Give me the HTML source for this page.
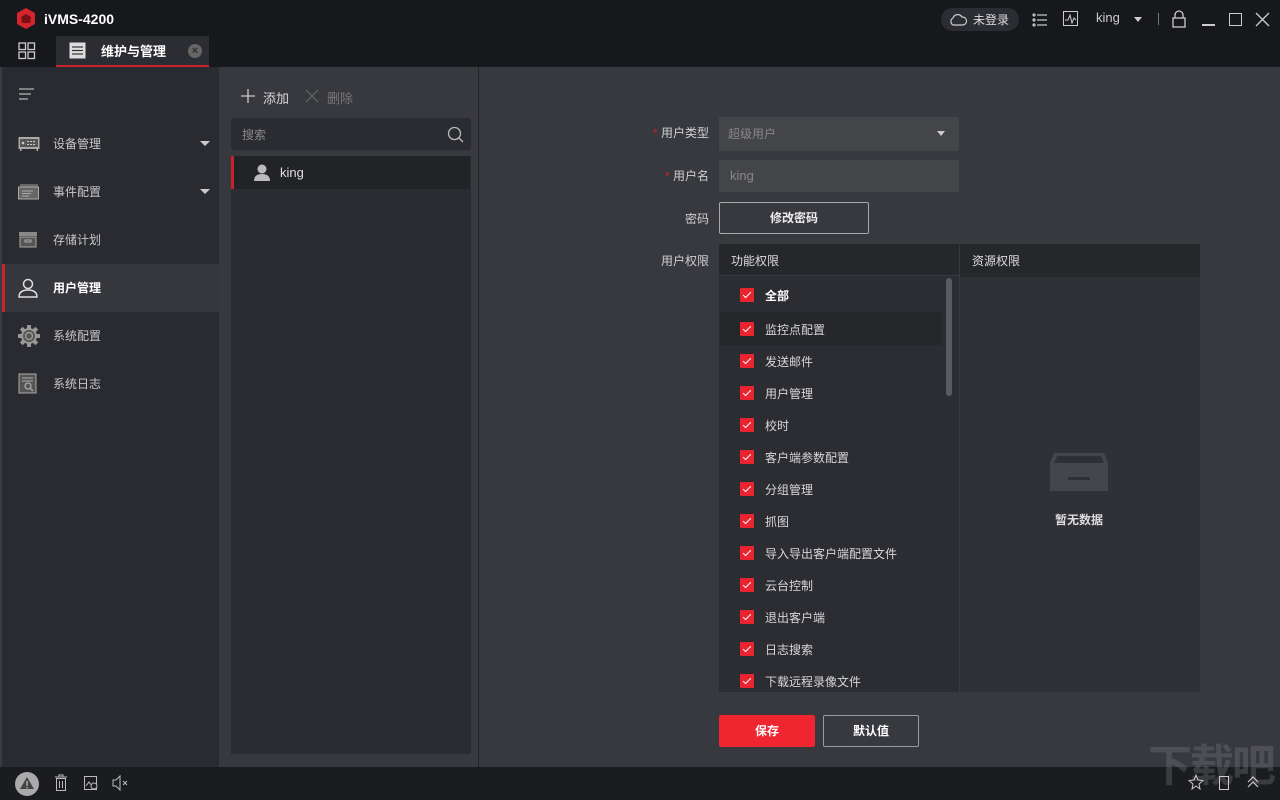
<!DOCTYPE html>
<html><head><meta charset="utf-8"><style>
*{margin:0;padding:0;box-sizing:border-box}
body{width:1280px;height:800px;overflow:hidden;background:#38393e;font-family:"Liberation Sans","Noto Sans CJK SC",sans-serif;font-size:12px;color:#d8d8d8;position:relative}
.abs{position:absolute}
.title{left:0;top:0;width:1280px;height:67px;background:#17181c}
.side{left:0;top:67px;width:219px;height:700px;background:#2a2b30;border-left:2px solid #3a3b40}
.mid{left:219px;top:67px;width:260px;height:700px;background:#38393e;border-right:1px solid #222}
.bot{left:0;top:767px;width:1280px;height:33px;background:#1b1c20}
.nav{position:absolute;left:2px;width:217px;height:48px;display:flex;align-items:center;color:#c8c8c8;font-size:12px}
.nav .t{position:absolute;left:51px;top:15px}
.nav .ic{position:absolute;left:16px}
.nav .ar{position:absolute;left:198px;top:21px;border:5px solid transparent;border-top:5px solid #ccc}
.lab{position:absolute;text-align:right;width:80px;color:#d0d0d0}
.cb{position:absolute;left:740px;width:14px;height:14px;background:#e8252f;border-radius:1px}
.cb:after{content:"";position:absolute;left:5px;top:2px;width:3px;height:7px;border:solid #fff;border-width:0 1.5px 1.5px 0;transform:rotate(45deg)}
.ct{position:absolute;left:765px;color:#d8d8d8;margin-top:-1px}
</style></head><body>
<div class="abs title"></div>
<svg class="abs" style="left:16px;top:8px" width="20" height="22" viewBox="0 0 20 22"><polygon points="10,0 19,5 19,16 10,21 1,16 1,5" fill="#d4242c"/><polygon points="10,6 15,9 14,15 6,15 5,9" fill="#7a0f14"/></svg>
<div class="abs" style="left:44px;top:11px;font-size:14px;font-weight:bold;color:#fff">iVMS-4200</div>
<svg class="abs" style="left:18px;top:42px" width="18" height="18"><g fill="none" stroke="#ccc" stroke-width="1.3"><rect x="1" y="1" width="6.5" height="6.5"/><rect x="10" y="1" width="6.5" height="6.5"/><rect x="1" y="10" width="6.5" height="6.5"/><rect x="10" y="10" width="6.5" height="6.5"/></g></svg>
<div class="abs" style="left:56px;top:36px;width:153px;height:31px;background:#2c2d32;border-bottom:2px solid #c8232b"></div>
<svg class="abs" style="left:69px;top:42px" width="17" height="17"><rect x="0.5" y="0.5" width="16" height="16" fill="#ddd"/><g stroke="#333" stroke-width="1.2"><line x1="3" y1="5" x2="14" y2="5"/><line x1="3" y1="8.5" x2="14" y2="8.5"/><line x1="3" y1="12" x2="14" y2="12"/></g></svg>
<div class="abs" style="left:101px;top:41px;font-size:13px;font-weight:bold;color:#fff">维护与管理</div>
<div class="abs" style="left:188px;top:44px;width:14px;height:14px;border-radius:50%;background:#666;color:#2c2d32;font-size:11px;line-height:14px;text-align:center;font-weight:bold">×</div>
<div class="abs" style="left:941px;top:8px;width:78px;height:23px;border-radius:12px;background:#2c2d32"></div>
<svg class="abs" style="left:948px;top:12px" width="20" height="15"><path d="M5 13 A4 4 0 0 1 5 6 A5 5 0 0 1 14 5 A4 4 0 0 1 15 13 Z" fill="none" stroke="#ccc" stroke-width="1.2"/></svg>
<div class="abs" style="left:973px;top:11px;color:#ddd;font-size:12px">未登录</div>
<svg class="abs" style="left:1032px;top:12px" width="16" height="16"><g stroke="#ccc" stroke-width="1.2" fill="none"><circle cx="2" cy="3" r="1"/><circle cx="2" cy="8" r="1"/><circle cx="2" cy="13" r="1"/><line x1="5" y1="3" x2="15" y2="3"/><line x1="5" y1="8" x2="15" y2="8"/><line x1="5" y1="13" x2="15" y2="13"/></g></svg>
<svg class="abs" style="left:1063px;top:11px" width="16" height="16"><rect x="0.5" y="0.5" width="14" height="14" fill="none" stroke="#ccc"/><path d="M2 9 L5 9 L7 4 L9 12 L11 7 L13 9" fill="none" stroke="#ccc"/></svg>
<div class="abs" style="left:1096px;top:10px;color:#ccc;font-size:13px">king</div>
<div class="abs" style="left:1134px;top:17px;border:4px solid transparent;border-top:5px solid #ccc"></div>
<div class="abs" style="left:1158px;top:13px;width:1px;height:12px;background:#777"></div>
<svg class="abs" style="left:1172px;top:10px" width="14" height="18"><path d="M3 8 V5 A4 4 0 0 1 11 5 V8" fill="none" stroke="#ccc" stroke-width="1.3"/><rect x="1" y="8" width="12" height="9" fill="none" stroke="#ccc" stroke-width="1.3"/></svg>
<div class="abs" style="left:1202px;top:24px;width:13px;height:1.5px;background:#ccc"></div>
<div class="abs" style="left:1229px;top:13px;width:13px;height:13px;border:1.5px solid #ccc"></div>
<svg class="abs" style="left:1255px;top:12px" width="15" height="15"><path d="M1 1 L14 14 M14 1 L1 14" stroke="#ccc" stroke-width="1.3"/></svg>

<div class="abs side"></div>
<svg class="abs" style="left:19px;top:88px" width="16" height="12"><g stroke="#bbb" stroke-width="1.2"><line x1="0" y1="1" x2="15" y2="1"/><line x1="0" y1="6" x2="12" y2="6"/><line x1="0" y1="11" x2="9" y2="11"/></g></svg>
<div class="nav" style="top:120px"><svg class="ic" width="22" height="16"><rect x="0.5" y="1" width="21" height="12" fill="#aaa"/><rect x="2" y="3" width="18" height="8" fill="#555"/><circle cx="5" cy="7" r="1.3" fill="#ccc"/><g fill="#ccc"><rect x="9" y="5" width="2" height="1"/><rect x="12" y="5" width="2" height="1"/><rect x="15" y="5" width="2" height="1"/><rect x="9" y="8" width="2" height="1"/><rect x="12" y="8" width="2" height="1"/><rect x="15" y="8" width="2" height="1"/></g><rect x="2" y="13" width="1.5" height="2" fill="#aaa"/><rect x="18.5" y="13" width="1.5" height="2" fill="#aaa"/></svg><span class="t">设备管理</span><span class="ar"></span></div>
<div class="nav" style="top:168px"><svg class="ic" width="22" height="16"><rect x="2" y="0" width="18" height="3" fill="#666"/><rect x="0.5" y="3" width="20" height="12" fill="#666" stroke="#aaa"/><g stroke="#aaa"><line x1="4" y1="7" x2="15" y2="7"/><line x1="4" y1="9.5" x2="13" y2="9.5"/><line x1="4" y1="12" x2="11" y2="12"/></g></svg><span class="t">事件配置</span><span class="ar"></span></div>
<div class="nav" style="top:216px"><svg class="ic" width="22" height="18"><rect x="1" y="1" width="18" height="4" fill="#888"/><rect x="2" y="6" width="16" height="10" fill="#555" stroke="#aaa"/><rect x="7" y="9" width="6" height="2" fill="none" stroke="#aaa"/></svg><span class="t">存储计划</span></div>
<div class="nav" style="top:264px;background:#36373d;color:#fff;font-weight:bold"><div style="position:absolute;left:0;top:0;width:3px;height:48px;background:#c8232b"></div><svg class="ic" width="20" height="20"><circle cx="10" cy="6" r="4.5" fill="none" stroke="#ddd" stroke-width="1.5"/><path d="M1 19 Q1 12 10 12 Q19 12 19 19 Z" fill="none" stroke="#ddd" stroke-width="1.5"/></svg><span class="t">用户管理</span></div>
<div class="nav" style="top:312px"><svg class="ic" width="22" height="22" viewBox="0 0 22 22"><g fill="#999"><circle cx="11" cy="11" r="8"/><g transform="translate(11 11)"><rect x="-2" y="-11" width="4" height="22"/><rect x="-2" y="-11" width="4" height="22" transform="rotate(45)"/><rect x="-2" y="-11" width="4" height="22" transform="rotate(90)"/><rect x="-2" y="-11" width="4" height="22" transform="rotate(135)"/></g></g><circle cx="11" cy="11" r="6" fill="#555"/><circle cx="11" cy="11" r="3.5" fill="none" stroke="#999" stroke-width="1.5"/></svg><span class="t">系统配置</span></div>
<div class="nav" style="top:360px"><svg class="ic" width="20" height="22"><rect x="1" y="1" width="17" height="19" fill="#555" stroke="#aaa"/><line x1="4" y1="5" x2="15" y2="5" stroke="#aaa"/><line x1="4" y1="8" x2="15" y2="8" stroke="#aaa"/><circle cx="10" cy="13" r="3" fill="none" stroke="#aaa" stroke-width="1.3"/><line x1="12" y1="15" x2="15" y2="18" stroke="#aaa" stroke-width="1.3"/></svg><span class="t">系统日志</span></div>

<div class="abs mid"></div>
<svg class="abs" style="left:240px;top:88px" width="16" height="16"><path d="M8 1 V15 M1 8 H15" stroke="#ccc" stroke-width="1.3"/></svg>
<div class="abs" style="left:263px;top:88px;color:#d8d8d8;font-size:13px">添加</div>
<svg class="abs" style="left:305px;top:89px" width="14" height="14"><path d="M1 1 L13 13 M13 1 L1 13" stroke="#666" stroke-width="1.2"/></svg>
<div class="abs" style="left:327px;top:88px;color:#777;font-size:13px">删除</div>
<div class="abs" style="left:231px;top:118px;width:240px;height:32px;background:#2b2c31;border-radius:2px"></div>
<div class="abs" style="left:242px;top:126px;color:#888">搜索</div>
<svg class="abs" style="left:447px;top:126px" width="18" height="18"><circle cx="7.5" cy="7.5" r="6" fill="none" stroke="#bbb" stroke-width="1.3"/><line x1="12" y1="12" x2="16" y2="16" stroke="#bbb" stroke-width="1.3"/></svg>
<div class="abs" style="left:231px;top:156px;width:240px;height:598px;background:#2b2c31"></div>
<div class="abs" style="left:231px;top:156px;width:239px;height:33px;background:#222327;border-left:3px solid #c8232b"></div>
<svg class="abs" style="left:253px;top:164px" width="18" height="17"><circle cx="9" cy="5" r="4.5" fill="#bbb"/><path d="M1 17 Q1 10 9 10 Q17 10 17 17 Z" fill="#bbb"/></svg>
<div class="abs" style="left:280px;top:165px;color:#e0e0e0;font-size:13px">king</div>

<div class="lab" style="left:629px;top:124px"><span style="color:#c8232b">* </span>用户类型</div>
<div class="abs" style="left:719px;top:117px;width:240px;height:34px;background:#444549;border-radius:2px"></div>
<div class="abs" style="left:728px;top:125px;color:#888">超级用户</div>
<div class="abs" style="left:937px;top:131px;border:4px solid transparent;border-top:5px solid #ccc"></div>
<div class="lab" style="left:629px;top:167px"><span style="color:#c8232b">* </span>用户名</div>
<div class="abs" style="left:719px;top:160px;width:240px;height:32px;background:#444549;border-radius:2px"></div>
<div class="abs" style="left:730px;top:168px;color:#888;font-size:13px">king</div>
<div class="lab" style="left:629px;top:210px">密码</div>
<div class="abs" style="left:719px;top:202px;width:150px;height:32px;border:1px solid #aaa;border-radius:2px;text-align:center;line-height:30px;color:#eee;font-weight:bold">修改密码</div>
<div class="lab" style="left:629px;top:252px">用户权限</div>
<div class="abs" style="left:719px;top:244px;width:240px;height:448px;background:#2c2d32"></div>
<div class="abs" style="left:719px;top:244px;width:240px;height:32px;background:#26272b;border-bottom:1px solid #3a3b40"></div>
<div class="abs" style="left:731px;top:252px;color:#ddd">功能权限</div>
<div class="abs" style="left:960px;top:244px;width:240px;height:448px;background:#303136"></div>
<div class="abs" style="left:960px;top:244px;width:240px;height:33px;background:#26272b"></div>
<div class="abs" style="left:972px;top:252px;color:#ddd">资源权限</div>
<div class="abs" style="left:720px;top:312px;width:222px;height:33px;background:#26272b"></div>
<div class="abs" style="left:946px;top:278px;width:6px;height:118px;background:#5a5b60;border-radius:3px"></div>
<svg class="abs" style="left:1050px;top:453px" width="58" height="40"><path d="M4 0 H54 L58 10 V38 H0 V10 Z" fill="#45464b"/><path d="M7 3 H51 L54 10 H4 Z" fill="#2f3035"/><rect x="18" y="24" width="22" height="3" fill="#2f3035"/></svg>
<div class="abs" style="left:1055px;top:511px;color:#ddd;font-weight:bold">暂无数据</div>

<div class="cb" style="top:288px"></div><div class="ct" style="top:288px;font-weight:bold;color:#fff">全部</div>
<div class="cb" style="top:322px"></div><div class="ct" style="top:322px">监控点配置</div>
<div class="cb" style="top:354px"></div><div class="ct" style="top:354px">发送邮件</div>
<div class="cb" style="top:386px"></div><div class="ct" style="top:386px">用户管理</div>
<div class="cb" style="top:418px"></div><div class="ct" style="top:418px">校时</div>
<div class="cb" style="top:450px"></div><div class="ct" style="top:450px">客户端参数配置</div>
<div class="cb" style="top:482px"></div><div class="ct" style="top:482px">分组管理</div>
<div class="cb" style="top:514px"></div><div class="ct" style="top:514px">抓图</div>
<div class="cb" style="top:546px"></div><div class="ct" style="top:546px">导入导出客户端配置文件</div>
<div class="cb" style="top:578px"></div><div class="ct" style="top:578px">云台控制</div>
<div class="cb" style="top:610px"></div><div class="ct" style="top:610px">退出客户端</div>
<div class="cb" style="top:642px"></div><div class="ct" style="top:642px">日志搜索</div>
<div class="cb" style="top:674px"></div><div class="ct" style="top:674px">下载远程录像文件</div>

<div class="abs" style="left:719px;top:715px;width:96px;height:32px;background:#ef2530;border-radius:2px;color:#fff;text-align:center;line-height:32px;font-weight:bold">保存</div>
<div class="abs" style="left:823px;top:715px;width:96px;height:32px;border:1px solid #999;border-radius:2px;color:#fff;text-align:center;line-height:30px;font-weight:bold">默认值</div>

<div class="abs bot"></div>
<div class="abs" style="left:15px;top:772px;width:24px;height:24px;border-radius:50%;background:#aaa"></div>
<svg class="abs" style="left:19px;top:775px" width="16" height="16"><path d="M8 2 L15 14 H1 Z" fill="#444"/><rect x="7.3" y="6" width="1.5" height="5" fill="#aaa"/><rect x="7.3" y="12" width="1.5" height="1.5" fill="#aaa"/></svg>
<svg class="abs" style="left:54px;top:774px" width="14" height="18"><g fill="none" stroke="#bbb"><rect x="2.5" y="4.5" width="9" height="12"/><line x1="1" y1="3" x2="13" y2="3"/><rect x="5" y="1" width="4" height="2"/><line x1="5.5" y1="7" x2="5.5" y2="14"/><line x1="8.5" y1="7" x2="8.5" y2="14"/></g></svg>
<svg class="abs" style="left:83px;top:775px" width="16" height="16"><rect x="1.5" y="1.5" width="12" height="13" fill="none" stroke="#bbb"/><path d="M3 11 L6 7 L9 11" fill="none" stroke="#bbb"/><circle cx="11" cy="11" r="3" fill="#1b1c20" stroke="#bbb"/></svg>
<svg class="abs" style="left:112px;top:775px" width="18" height="16"><path d="M1 5 H4 L8 1 V15 L4 11 H1 Z" fill="none" stroke="#bbb"/><path d="M11 6 L15 10 M15 6 L11 10" stroke="#bbb"/></svg>
<div class="abs" style="left:1148px;top:742px;color:rgba(120,120,125,0.35);font-size:44px;font-weight:bold;line-height:50px;letter-spacing:-2px">下载吧</div>
<svg class="abs" style="left:1188px;top:774px" width="16" height="16"><path d="M8 1 L10 6 L15 6.5 L11 10 L12 15 L8 12 L4 15 L5 10 L1 6.5 L6 6 Z" fill="none" stroke="#ccc"/></svg>
<div class="abs" style="left:1219px;top:776px;width:10px;height:14px;border:1.3px solid #ccc"></div>
<svg class="abs" style="left:1246px;top:774px" width="14" height="16"><path d="M2 8 L7 3 L12 8 M2 13 L7 8 L12 13" fill="none" stroke="#ccc" stroke-width="1.2"/></svg>
</body></html>
